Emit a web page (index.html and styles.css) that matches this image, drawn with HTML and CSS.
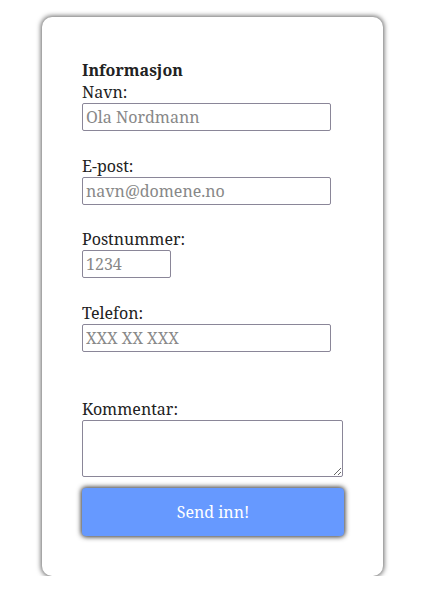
FILE: index.html
```html
<!DOCTYPE html>
<html lang="no">
<head>
<meta charset="utf-8">
<title>Skjema</title>
<link rel="stylesheet" href="styles.css">
</head>
<body>
<form class="card">
  <h3 class="title">Informasjon</h3>
  <div class="field">
    <label for="navn">Navn:</label>
    <input id="navn" class="input wide" type="text" placeholder="Ola Nordmann">
  </div>
  <div class="field">
    <label for="epost">E-post:</label>
    <input id="epost" class="input wide" type="email" placeholder="navn@domene.no">
  </div>
  <div class="field">
    <label for="post">Postnummer:</label>
    <input id="post" class="input short" type="text" placeholder="1234">
  </div>
  <div class="field">
    <label for="tlf">Telefon:</label>
    <input id="tlf" class="input wide" type="tel" placeholder="XXX XX XXX">
  </div>
  <div class="field extra">
    <label for="kom">Kommentar:</label>
    <textarea id="kom" class="area"></textarea>
  </div>
  <button class="send" type="button">Send inn!</button>
</form>
</body>
</html>
```
FILE: styles.css
```css
html, body {
  margin: 0;
  padding: 0;
  background: #fff;
}
body {
  font-family: "Noto Serif", "Droid Serif", "DejaVu Serif", serif;
  font-size: 16px;
  color: #222;
  padding-top: 17px;
}
.card {
  box-sizing: border-box;
  width: 341px;
  height: 559px;
  margin: 0 0 0 42px;
  padding: 43px 40px 0 40px;
  border-radius: 10px;
  box-shadow: 0 0 5px 1px #666;
  display: flex;
  flex-direction: column;
}
.title {
  margin: 0;
  font-size: 16px;
  font-weight: bold;
  line-height: 21px;
}
.field {
  display: flex;
  flex-direction: column;
  align-items: flex-start;
  margin-bottom: 23.7px;
}
.field label {
  line-height: 22px;
}
.input {
  box-sizing: border-box;
  height: 28px;
  font-family: inherit;
  font-size: 16px;
  padding: 0 3px;
  border: 1px solid #8a8698;
  border-radius: 2px;
  margin: 0;
}
.input::placeholder { color: #888; }
.wide { width: 249px; }
.short { width: 89px; }
.extra { margin-top: 22px; margin-bottom: 11px; }
.area {
  box-sizing: border-box;
  width: 261px;
  height: 57px;
  border: 1px solid #8a8698;
  border-radius: 2px;
  margin: 0;
}
.send {
  width: 262px;
  height: 48px;
  background: #6699ff;
  color: #fff;
  font-family: inherit;
  font-size: 16px;
  border: none;
  border-radius: 4px;
  box-shadow: 0 0 5px 1px #333;
}
```
